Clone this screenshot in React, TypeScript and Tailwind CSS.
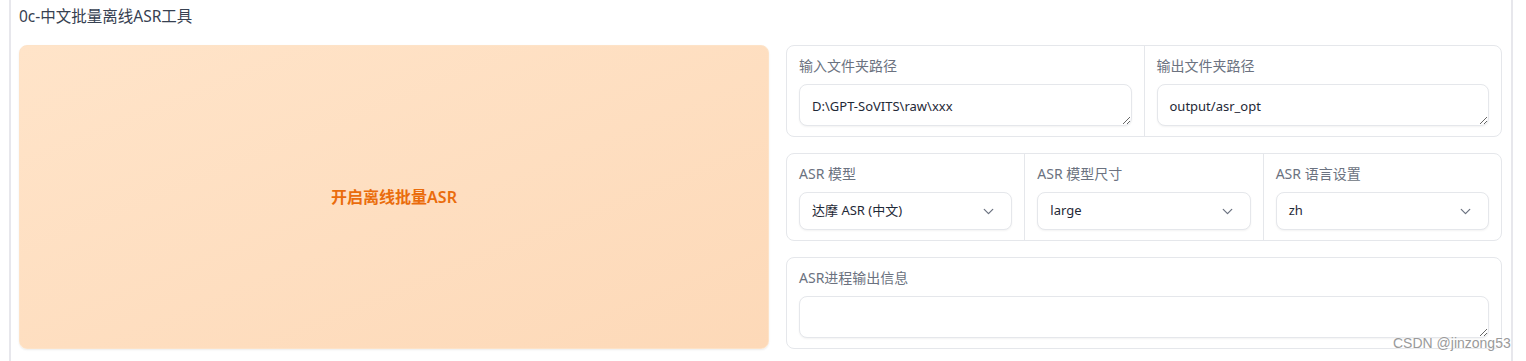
import { ChevronDown } from 'lucide-react'

const font = { fontFamily: '"Noto Sans", "Noto Sans CJK SC", sans-serif' }

function Label({ text }: { text: string }) {
    return <div className="text-[14px] leading-[20px] text-[#6b7280] mb-2">{text}</div>
}

function Area({ value }: { value: string }) {
    return (
        <textarea
            readOnly
            defaultValue={value}
            className="block w-full h-[42px] rounded-lg border border-[#e5e7eb] bg-white px-3 pt-[11px] pb-[9px] text-[13px] leading-[20px] text-[#1f2937] shadow-[0_1px_2px_rgba(0,0,0,0.05)] outline-none"
        />
    )
}

function Select({ value }: { value: string }) {
    return (
        <div className="flex items-center justify-between h-[38px] rounded-lg border border-[#e5e7eb] bg-white pl-3 pr-[14px] shadow-[0_1px_2px_rgba(0,0,0,0.05)]">
            <span className="text-[13px] text-[#1f2937]">{value}</span>
            <ChevronDown size={17} strokeWidth={1.75} className="text-[#6b7280]" />
        </div>
    )
}

export default function App() {
    return (
        <div style={font} className="relative h-[361px] bg-white">
            <div className="ml-[9px] w-[1504px] h-full border-x-2 border-[#e7e7ec] pl-2 pr-[9px] pt-[6px]">
                <div className="text-[15.5px] leading-[20px] text-[#374151] mb-[19px]">0c-中文批量离线ASR工具</div>
                <div className="flex gap-[17px]">
                    <button className="w-[750px] h-[304px] rounded-lg border border-[#fde3c8] bg-gradient-to-br from-[#ffe4c9] to-[#fdd9b8] shadow-[0_1px_2px_rgba(0,0,0,0.08)] text-[16px] font-semibold text-[#ea6c0c]">
                        开启离线批量ASR
                    </button>
                    <div className="flex-1 flex flex-col gap-4">
                        <div className="flex rounded-lg border border-[#e5e7eb]">
                            <div className="flex-1 px-3 py-[10px] border-r border-[#e5e7eb]">
                                <Label text="输入文件夹路径" />
                                <Area value="D:\GPT-SoVITS\raw\xxx" />
                            </div>
                            <div className="flex-1 px-3 py-[10px]">
                                <Label text="输出文件夹路径" />
                                <Area value="output/asr_opt" />
                            </div>
                        </div>
                        <div className="flex rounded-lg border border-[#e5e7eb]">
                            <div className="flex-1 px-3 py-[10px] border-r border-[#e5e7eb]">
                                <Label text="ASR 模型" />
                                <Select value="达摩 ASR (中文)" />
                            </div>
                            <div className="flex-1 px-3 py-[10px] border-r border-[#e5e7eb]">
                                <Label text="ASR 模型尺寸" />
                                <Select value="large" />
                            </div>
                            <div className="flex-1 px-3 py-[10px]">
                                <Label text="ASR 语言设置" />
                                <Select value="zh" />
                            </div>
                        </div>
                        <div className="rounded-lg border border-[#e5e7eb] px-3 py-[10px]">
                            <Label text="ASR进程输出信息" />
                            <Area value="" />
                        </div>
                    </div>
                </div>
            </div>
            <div
                style={{ fontFamily: '"Liberation Sans", Arial, sans-serif' }}
                className="absolute left-[1393px] top-[335px] text-[14px] leading-[16px] text-[#9a9a9a] [text-shadow:0_0_2px_#fff]"
            >
                CSDN @jinzong53
            </div>
        </div>
    )
}
